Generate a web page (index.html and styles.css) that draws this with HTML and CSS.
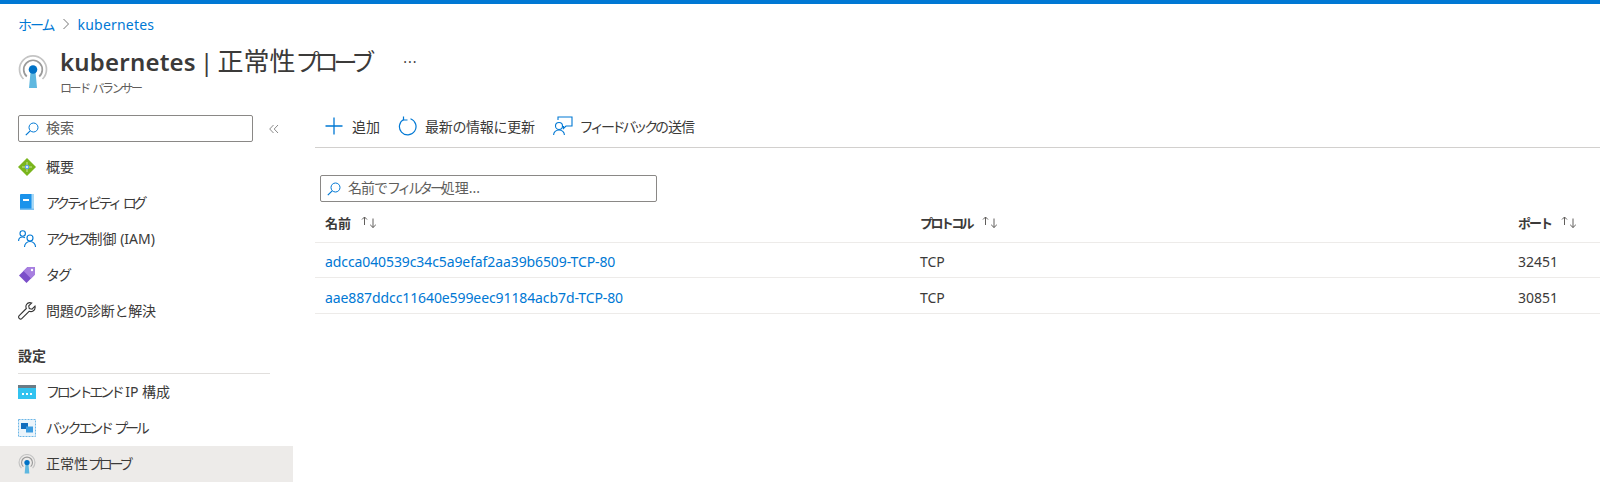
FILE: index.html
```html
<!DOCTYPE html>
<html lang="ja">
<head>
  <meta charset="UTF-8">
  <meta name="viewport" content="width=device-width, initial-scale=1.0">
  <title>kubernetes | 正常性プローブ</title>
  <link rel="stylesheet" href="styles.css">
</head>
<body>
  <div class="top-bar"></div>

  <nav class="breadcrumb">
    <a href="#" class="tight-2">ホーム</a>
    <svg class="crumb-sep" width="8" height="12" viewBox="0 0 8 12"><path d="M1.5 1l5 5-5 5" fill="none" stroke="#777" stroke-width="1"/></svg>
    <a href="#" class="crumb-name">kubernetes</a>
  </nav>

  <header class="page-header">
    <svg class="page-icon" width="30" height="34" viewBox="0 0 30 34">
      <path d="M5.5 24A13.5 13.5 0 1 1 24.500 24" fill="none" stroke="#c4c4c4" stroke-width="1.700"/>
      <path d="M8.800 21.500A9.300 9.300 0 1 1 21.200 21.500" fill="none" stroke="#9a9a9a" stroke-width="1.700"/>
      <path d="M12.500 17h5l1.500 16h-8z" fill="#5fb8e0"/>
      <circle cx="15" cy="14.500" r="4.300" fill="#0072c6"/>
    </svg>
    <div class="title-block">
      <div class="title-row">
        <h1><b>kubernetes</b> | <span class="title-kanji">正常性</span><span class="title-kana">プローブ</span></h1>
        <span class="more">···</span>
      </div>
      <div class="subtitle">ロード バランサー</div>
    </div>
  </header>

  <div class="layout">
    <aside class="sidebar">
      <div class="side-search-row">
        <div class="search-box side-search">
          <svg width="14" height="14" viewBox="0 0 14 14"><circle cx="8.500" cy="5.500" r="4.500" fill="none" stroke="#0078d4" stroke-width="1"/><path d="M5.200 8.800L.8 13.200" stroke="#0078d4" stroke-width="1.200"/></svg>
          <span>検索</span>
        </div>
        <svg class="collapse" width="10" height="10" viewBox="0 0 10 10"><path d="M4.500 1L.7 5l3.800 4M9 1L5.200 5 9 9" fill="none" stroke="#8a8a8a" stroke-width="1"/></svg>
      </div>

      <ul class="menu">
        <li>
          <svg width="18" height="18" viewBox="0 0 18 18"><path d="M9 0l9 9-9 9-9-9z" fill="#7ab51d"/><path d="M9 4v10M4 9h10" stroke="#c9e59a" stroke-width="1"/><circle cx="9" cy="9" r="2.200" fill="#5ea0ef"/><circle cx="9" cy="9" r="1" fill="#fff"/></svg>
          <span>概要</span>
        </li>
        <li>
          <svg width="16" height="18" viewBox="0 0 16 18"><rect x="1" y="0" width="14" height="16" rx="1" fill="#1b93eb"/><rect x="12.500" y="0" width="2.500" height="16" fill="#a8d8f5"/><rect x="1" y="14.500" width="14" height="1.500" fill="#7cc0f0"/><rect x="4" y="5" width="6" height="2" fill="#fff"/></svg>
          <span class="tight-3">アクティビティ ログ</span>
        </li>
        <li>
          <svg width="18" height="18" viewBox="0 0 18 18" fill="none" stroke="#0078d4" stroke-width="1.100"><circle cx="4.700" cy="3.500" r="2.700"/><path d="M.6 11c0-2.300 1.700-4 4-4 1 0 1.700.3 2.300.7"/><circle cx="12" cy="8" r="3"/><path d="M6.500 17c0-3 2.300-5.500 5.500-5.500s5.500 2.500 5.500 5.500"/></svg>
          <span><span class="tight-3">アクセス</span>制御 (IAM)</span>
        </li>
        <li>
          <svg width="16" height="16" viewBox="0 0 16 16"><path d="M8.500 0H16v7.500L7.500 16 0 8.500z" fill="#7b4fc9"/><path d="M8.500 0H16v7.500L12 11.500 4.500 4z" fill="#a77fe0"/><circle cx="13" cy="3" r="1.200" fill="#fff"/></svg>
          <span class="tight-2">タグ</span>
        </li>
        <li>
          <svg width="18" height="18" viewBox="0 0 18 18"><path d="M17 4.200l-3 3-2.700-.6-.6-2.700 3-3C11.500.2 9.400 1 8.500 2.500c-.8 1.300-.7 2.800-.2 4L1.200 13.600c-.8.800-.8 2 0 2.800s2 .8 2.800 0l7.100-7.100c1.300.5 2.800.5 4-.3 1.500-1 2.300-3 1.900-4.800z" fill="none" stroke="#333" stroke-width="1.100"/></svg>
          <span class="tight-0">問題の診断と解決</span>
        </li>
      </ul>

      <h2 class="menu-heading"><span>設定</span></h2>

      <ul class="menu">
        <li>
          <svg width="18" height="14" viewBox="0 0 18 14"><rect width="18" height="14" fill="#32c3f0"/><rect width="18" height="3" fill="#6b7b85"/><rect x="4" y="8" width="2" height="2" fill="#fff"/><rect x="8" y="8" width="2" height="2" fill="#fff"/><rect x="12" y="8" width="2" height="2" fill="#fff"/></svg>
          <span><span class="tight-3">フロントエンド</span> IP 構成</span>
        </li>
        <li>
          <svg width="18" height="18" viewBox="0 0 18 18"><rect x=".5" y=".5" width="17" height="17" fill="#eaf4fb" stroke="#6db6e6" stroke-dasharray="2 1"/><rect x="3" y="4" width="7" height="6" fill="#0f6cbd"/><rect x="8" y="7.500" width="7" height="6" fill="#3a9be0"/></svg>
          <span class="tight-3">バックエンド プール</span>
        </li>
        <li class="active">
          <svg width="18" height="20" viewBox="0 0 30 34">
            <path d="M5.500 24A13.500 13.500 0 1 1 24.500 24" fill="none" stroke="#c4c4c4" stroke-width="2"/>
            <path d="M8.800 21.500A9.300 9.300 0 1 1 21.200 21.500" fill="none" stroke="#9a9a9a" stroke-width="2"/>
            <path d="M12.500 17h5l1.500 16h-8z" fill="#5fb8e0"/>
            <circle cx="15" cy="14.500" r="4.500" fill="#0072c6"/>
          </svg>
          <span>正常性<span class="tight-3">プローブ</span></span>
        </li>
      </ul>
    </aside>

    <main class="content">
      <div class="toolbar">
        <span class="tool">
          <svg width="18" height="18" viewBox="0 0 18 18"><path d="M9 .5v17M.5 9h17" stroke="#0078d4" stroke-width="1.300"/></svg>
          <span>追加</span>
        </span>
        <span class="tool tool-refresh">
          <svg width="19" height="20" viewBox="0 0 19 20" fill="none" stroke="#0078d4" stroke-width="1.200"><path d="M6 3.200A8.300 8.300 0 1 0 12.500 2.800"/><path d="M5.500.5v3.500H9.500"/></svg>
          <span class="tight-0">最新の情報に更新</span>
        </span>
        <span class="tool tool-feedback">
          <svg width="20" height="20" viewBox="0 0 20 20" fill="none" stroke="#0078d4" stroke-width="1.100"><path d="M5 4V1h14v9h-6l-2.500 2.500V10"/><circle cx="6" cy="10" r="3.500"/><path d="M.6 19c0-3 2.400-5 5.400-5s5.400 2 5.400 5"/></svg>
          <span><span class="tight-3">フィードバック</span><span class="tight-1">の送信</span></span>
        </span>
      </div>

      <div class="search-box filter">
        <svg width="14" height="14" viewBox="0 0 14 14"><circle cx="8.500" cy="5.500" r="4.500" fill="none" stroke="#0078d4" stroke-width="1"/><path d="M5.200 8.800L.8 13.200" stroke="#0078d4" stroke-width="1.200"/></svg>
        <span><span class="tight-1">名前で</span><span class="tight-3">フィルター</span>処理...</span>
      </div>

      <div class="grid-row grid-head">
        <div class="head-cell">名前 <svg class="sort" width="18" height="14" viewBox="0 0 18 14"><path d="M4.500 10V2M2 4.500L4.500 2 7 4.500M13 3.500V12.500M10.200 9.800L13 12.500l2.800-2.700" fill="none" stroke="#605e5c" stroke-width="1"/></svg></div>
        <div class="head-cell"><span class="head-kana">プロトコル</span> <svg class="sort" width="18" height="14" viewBox="0 0 18 14"><path d="M4.500 10V2M2 4.500L4.500 2 7 4.500M13 3.500V12.500M10.200 9.800L13 12.500l2.800-2.700" fill="none" stroke="#605e5c" stroke-width="1"/></svg></div>
        <div class="head-cell"><span class="tight-2">ポート</span> <svg class="sort" width="18" height="14" viewBox="0 0 18 14"><path d="M4.500 10V2M2 4.500L4.500 2 7 4.500M13 3.500V12.500M10.200 9.800L13 12.500l2.800-2.700" fill="none" stroke="#605e5c" stroke-width="1"/></svg></div>
      </div>
      <div class="grid-row">
        <div><a href="#">adcca040539c34c5a9efaf2aa39b6509-TCP-80</a></div>
        <div>TCP</div>
        <div>32451</div>
      </div>
      <div class="grid-row">
        <div><a href="#">aae887ddcc11640e599eec91184acb7d-TCP-80</a></div>
        <div>TCP</div>
        <div>30851</div>
      </div>
    </main>
  </div>
</body>
</html>
```

FILE: styles.css
```css
html, body {
  height: 100%;
}
body {
  margin: 0;
  overflow: hidden;
  background: #fff;
  color: #3b3a39;
  font-family: "Noto Sans", "Noto Sans CJK JP", sans-serif;
  font-size: 13px;
}
a {
  color: #0078d4;
  text-decoration: none;
}
ul {
  list-style: none;
  margin: 0;
  padding: 0;
}
/* kana in the reference font is narrower than in Noto */
.tight-0 { letter-spacing: -.3px; }
.tight-1 { letter-spacing: -1px; word-spacing: 1px; }
.tight-2 { letter-spacing: -2px; word-spacing: 2px; }
.tight-3 { letter-spacing: -3.2px; word-spacing: 3px; }

.top-bar {
  height: 4px;
  background: #0078d4;
}
.breadcrumb {
  display: flex;
  align-items: center;
  gap: 8px;
  height: 20px;
  margin-top: 10px;
  padding-left: 18px;
  font-size: 14px;
}
.crumb-name {
  letter-spacing: .2px;
}
.page-header {
  display: flex;
  align-items: flex-start;
  height: 71px;
  padding: 7px 0 0 18px;
  box-sizing: border-box;
}
.page-icon {
  margin: 14px 12px 0 0;
}
.title-row {
  display: flex;
  align-items: center;
}
h1 {
  margin: 0;
  font-size: 24px;
  font-weight: 400;
  line-height: 40px;
  word-spacing: -2px;
}
h1 b {
  font-weight: 600;
  letter-spacing: .2px;
}
.title-kanji {
  font-size: 26px;
}
.title-kana {
  letter-spacing: -5px;
}
.more {
  margin-left: 33px;
  font-size: 14px;
  letter-spacing: 1px;
}
.subtitle {
  margin-top: -3px;
  font-size: 12px;
  letter-spacing: -2.4px;
  word-spacing: 3px;
  color: #605e5c;
}
.layout {
  display: flex;
  height: 377px;
}
.sidebar {
  flex: none;
  width: 293px;
  margin-top: 10px;
}
.side-search-row {
  display: flex;
  align-items: center;
  padding-left: 18px;
}
.search-box {
  display: flex;
  align-items: center;
  gap: 7px;
  box-sizing: border-box;
  border: 1px solid #8a8886;
  border-radius: 2px;
  padding-left: 6px;
  color: #605e5c;
  font-size: 14px;
}
.search-box > span {
  margin-top: -4px;
}
.side-search {
  width: 235px;
  height: 27px;
}
.collapse {
  margin-left: 16px;
}
.menu li {
  display: flex;
  align-items: center;
  height: 36px;
  padding-left: 18px;
  font-size: 14px;
}
.menu li > span {
  margin-top: -2px;
}
.menu li svg {
  flex: none;
  width: 18px;
  margin-right: 10px;
}
.menu li.active {
  background: #edebe9;
}
.side-search-row + .menu {
  margin-top: 7px;
}
.menu-heading {
  display: flex;
  align-items: center;
  box-sizing: border-box;
  height: 37px;
  margin: 8px 23px 0 18px;
  border-bottom: 1px solid #e1dfdd;
  font-size: 14px;
  font-weight: 600;
}
.content {
  flex: 1;
  min-width: 0;
  margin: 0 0 0 22px;
}
.toolbar {
  display: flex;
  align-items: center;
  gap: 18px;
  height: 42px;
  padding-left: 10px;
  border-bottom: 1px solid #d2d0ce;
  font-size: 14px;
}
.tool {
  display: flex;
  align-items: center;
  gap: 9px;
}
.tool-refresh {
  gap: 8px;
}
.tool-feedback {
  gap: 7px;
}
.filter {
  width: 337px;
  height: 27px;
  margin: 27px 0 0 5px;
}
.grid-row {
  display: grid;
  grid-template-columns: 595px 598px 1fr;
  align-items: center;
  box-sizing: border-box;
  height: 35px;
  padding: 3px 0 0 10px;
  border-bottom: 1px solid #edebe9;
  font-size: 14px;
}
.grid-row:last-child {
  height: 36px;
}
.grid-row a {
  letter-spacing: -.1px;
}
.grid-head {
  height: 41px;
  padding-top: 0;
  font-weight: 600;
  font-size: 13px;
}
.head-cell {
  display: flex;
  align-items: center;
  gap: 9px;
}
.head-kana {
  letter-spacing: -2.6px;
}
```
